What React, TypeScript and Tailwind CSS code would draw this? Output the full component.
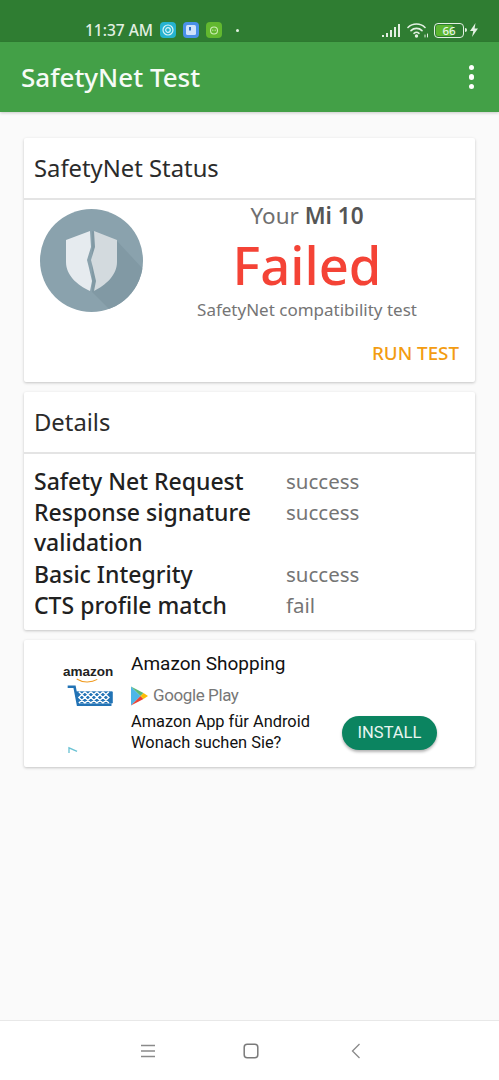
const UI_FONT = "font-['Noto_Sans',sans-serif]";

function StatusBar() {
  return (
    <div className="flex h-[42px] items-end bg-[#2f7d32] pb-[1px] pl-[85px] pr-[20px]">
      <span className="text-[15.5px] font-medium leading-[22px] text-[#e3f0e3]">11:37 AM</span>
      <div className="mb-[3px] ml-[7px] flex items-center gap-[7px]">
        <svg width="16" height="16" viewBox="0 0 16 16">
          <rect width="16" height="16" rx="4" fill="#26b3cf" />
          <circle cx="8" cy="8" r="5" fill="none" stroke="#d8f4f8" strokeWidth="1.2" />
          <circle cx="8" cy="8" r="2.3" fill="none" stroke="#d8f4f8" strokeWidth="1.2" />
        </svg>
        <svg width="16" height="16" viewBox="0 0 16 16">
          <rect width="16" height="16" rx="4" fill="#4a90e8" />
          <rect x="3" y="3" width="10" height="10" rx="1.5" fill="#cfe2fb" />
          <rect x="6" y="5" width="2" height="3.5" fill="#2e6ec4" />
        </svg>
        <svg width="16" height="16" viewBox="0 0 16 16">
          <rect width="16" height="16" rx="4" fill="#62b82f" />
          <circle cx="8" cy="8.5" r="3.5" fill="none" stroke="#cdeeb4" strokeWidth="1.1" />
          <circle cx="6.8" cy="8.2" r="0.6" fill="#cdeeb4" />
          <circle cx="9.2" cy="8.2" r="0.6" fill="#cdeeb4" />
        </svg>
        <span className="ml-[7px] h-[3px] w-[3px] rounded-full bg-[#e3f0e3]" />
      </div>
      <div className="mb-[3px] ml-auto flex items-center">
        <svg width="20" height="15" viewBox="0 0 20 15" fill="#e3f0e3">
          <rect x="0" y="12" width="2" height="2" />
          <rect x="4" y="10" width="2" height="4" />
          <rect x="8" y="7" width="2" height="7" />
          <rect x="12" y="4" width="2" height="10" />
          <rect x="16" y="1" width="2" height="13" />
        </svg>
        <svg className="ml-[5px]" width="22" height="16" viewBox="0 0 22 16" fill="none" stroke="#e3f0e3" strokeWidth="1.6" strokeLinecap="round">
          <path d="M1 5.5 C5.5 0.8 13.5 0.8 18 5.5" />
          <path d="M4 8.6 C7 5.6 12 5.6 15 8.6" />
          <path d="M7 11.3 C8.5 10 10.5 10 12 11.3" />
          <circle cx="9.5" cy="14" r="0.9" fill="#e3f0e3" />
          <path d="M18 13v2M20.5 12v3" strokeWidth="1" />
        </svg>
        <div className="relative ml-[5px] flex h-[15px] w-[30px] items-center rounded-[4px] border border-[#e3f0e3] p-[1px]">
          <div className="h-full w-[65%] rounded-[2px] bg-[#5cb531]" />
          <span className="absolute inset-0 text-center text-[11.5px] font-medium leading-[13px] text-[#e8f5e8]">66</span>
        </div>
        <span className="ml-[1px] h-[4px] w-[2px] rounded-r-sm bg-[#e3f0e3]" />
        <svg className="ml-[2px]" width="10" height="14" viewBox="0 0 10 14" fill="#e3f0e3">
          <path d="M6.5 0 L1 8 H4.3 L3 14 L9 5.6 H5.6 Z" />
        </svg>
      </div>
    </div>
  );
}

function AppBar() {
  return (
    <div className="flex h-[70px] items-center justify-between bg-[#43a047] pl-[21px] pr-[25px] shadow-[0_1px_3px_rgba(0,0,0,0.2)]">
      <span className="text-[26px] font-medium leading-[32px] text-[#f6fbf6]">SafetyNet Test</span>
      <div className="flex flex-col gap-[4px]">
        <span className="h-[5.5px] w-[5.5px] rounded-full bg-white" />
        <span className="h-[5.5px] w-[5.5px] rounded-full bg-white" />
        <span className="h-[5.5px] w-[5.5px] rounded-full bg-white" />
      </div>
    </div>
  );
}

function ShieldBadge() {
  return (
    <svg width="103" height="103" viewBox="0 0 103 103">
      <defs>
        <clipPath id="badge">
          <circle cx="51.5" cy="51.5" r="51.5" />
        </clipPath>
      </defs>
      <circle cx="51.5" cy="51.5" r="51.5" fill="#8aa2ad" />
      <path d="M52 22 L77 32 L103 60 V103 H72 L52 83 Z" fill="#8199a4" clipPath="url(#badge)" />
      <path d="M50 22 L26 31 V53 C26 66 37 76 50 82 L52 72 L49 59 L47 51 L51 38 Z" fill="#e6ebef" />
      <path d="M54 22 L77 31 V53 C77 66 66 76 54 82 L56 72 L53 59 L51 51 L55 38 Z" fill="#d3dade" />
    </svg>
  );
}

function StatusCard() {
  return (
    <div className="rounded-[2px] bg-white shadow-[0_1px_3px_rgba(0,0,0,0.22)]">
      <div className="flex h-[62px] items-center border-b-2 border-[#e4e4e4] pl-[10px]">
        <span className="text-[23.8px] leading-[30px] text-[#2b2b2b]">SafetyNet Status</span>
      </div>
      <div className="flex h-[182px]">
        <div className="pl-[16px] pt-[9px]">
          <ShieldBadge />
        </div>
        <div className="flex flex-1 flex-col">
          <div className="flex flex-col items-center pr-[4px] text-center">
            <span className="text-[22.5px] leading-[32px] text-[#6f6f6f]">
              Your <span className="font-semibold text-[#555]">Mi 10</span>
            </span>
            <span className="mt-[-1px] text-[52.5px] font-medium leading-[67px] text-[#f44336]">Failed</span>
            <span className="text-[17px] leading-[24px] text-[#757575]">SafetyNet compatibility test</span>
          </div>
          <div className="mt-[19px] pr-[16px] text-right text-[18.8px] font-medium leading-[24px] text-[#f39c12]">RUN TEST</div>
        </div>
      </div>
    </div>
  );
}

const DETAILS = [
  { label: "Safety Net Request", value: "success" },
  { label: "Response signature validation", value: "success" },
  { label: "Basic Integrity", value: "success" },
  { label: "CTS profile match", value: "fail" },
];

function DetailsCard() {
  return (
    <div className="rounded-[2px] bg-white shadow-[0_1px_3px_rgba(0,0,0,0.22)]">
      <div className="flex h-[62px] items-center border-b-2 border-[#e4e4e4] pl-[10px]">
        <span className="text-[23.8px] leading-[30px] text-[#2b2b2b]">Details</span>
      </div>
      <div className="flex flex-col gap-[1px] pb-[10px] pl-[10px] pt-[12px]">
        {DETAILS.map((d) => (
          <div key={d.label} className="flex [&:nth-child(2)]:pb-[1px]">
            <span className="w-[252px] pr-[20px] text-[23px] font-medium leading-[30px] text-[#212121]">{d.label}</span>
            <span className="text-[20.5px] leading-[30px] text-[#757575]">{d.value}</span>
          </div>
        ))}
      </div>
    </div>
  );
}

function AmazonLogo() {
  return (
    <div className="flex h-[103px] w-[62px] flex-col items-start overflow-hidden">
      <span className="ml-[1px] mt-[14px] font-['Liberation_Sans',sans-serif] text-[13.5px] font-bold leading-[16px] text-[#222]">amazon</span>
      <svg className="ml-[13px] mt-[-2px]" width="24" height="6" viewBox="0 0 28 6" fill="none" stroke="#f09a1f" strokeWidth="1.2">
        <path d="M2 1 C9 5.5 19 5.5 26 1.5" />
      </svg>
      <svg className="ml-[2px] mt-[2px]" width="52" height="24" viewBox="0 0 54 25" fill="none" stroke="#2273b5">
        <path d="M1 2 H9 L13 23 H52" strokeWidth="3" />
        <path d="M11 8 H53 V21 H14 Z" fill="#2273b5" strokeWidth="1" />
        <path d="M14 8 L21 14.5 L14 21 M21 8 L28 14.5 L21 21 M28 8 L35 14.5 L28 21 M35 8 L42 14.5 L35 21 M42 8 L49 14.5 L42 21 M21 8 L14 14.5 L21 21 M28 8 L21 14.5 L28 21 M35 8 L28 14.5 L35 21 M42 8 L35 14.5 L42 21 M49 8 L42 14.5 L49 21" stroke="#fff" strokeWidth="1.6" />
      </svg>
      <svg className="ml-[-4px] mt-[39px]" width="22" height="8" viewBox="0 0 22 8" fill="none" stroke="#6cc3d4" strokeWidth="1.5">
        <path d="M1 7 L3 5 M11 8 L11 2 L20 6" />
      </svg>
    </div>
  );
}

function PlayLogo() {
  return (
    <svg width="17" height="20" viewBox="0 0 17 20">
      <path d="M0 0.5 V19.5 L9.5 10 Z" fill="#4db6e8" />
      <path d="M0 0.5 L9.5 10 L12.5 7 Z" fill="#5bb974" />
      <path d="M0 19.5 L9.5 10 L12.5 13 Z" fill="#ea4335" />
      <path d="M12.5 7 L17 10 L12.5 13 L9.5 10 Z" fill="#fbbc04" />
    </svg>
  );
}

function AdCard() {
  return (
    <div className="flex h-[127px] rounded-[2px] bg-white pl-[38px] pt-[10px] font-['Roboto',sans-serif] shadow-[0_1px_3px_rgba(0,0,0,0.22)]">
      <AmazonLogo />
      <div className="ml-[7px] flex flex-col">
        <span className="text-[19px] leading-[28px] text-[#111]">Amazon Shopping</span>
        <div className="mt-[6px] flex h-[24px] items-center gap-[5px]">
          <PlayLogo />
          <span className="text-[17px] tracking-[-0.4px] text-[#777]">Google Play</span>
        </div>
        <div className="mt-[3px] flex items-end">
          <div className="w-[211px] text-[16.4px] leading-[21px] text-[#111]">
            Amazon App für Android
            <br />
            Wonach suchen Sie?
          </div>
          <div className="mb-[3px] flex h-[34px] w-[95px] items-center justify-center rounded-full bg-[#0b8460] text-[16.5px] text-[#e8f5f0] shadow-[0_2px_3px_rgba(0,0,0,0.3)]">
            INSTALL
          </div>
        </div>
      </div>
    </div>
  );
}

function NavBar() {
  return (
    <div className="flex h-[60px] items-start justify-center border-t border-[#e8e8e8] bg-white pl-[2px] pt-[22px]">
      <svg width="16" height="16" viewBox="0 0 16 16" stroke="#8a8a8a" strokeWidth="1.3">
        <path d="M1 2.5 H15 M1 8 H15 M1 13.5 H15" />
      </svg>
      <svg className="ml-[87px]" width="16" height="16" viewBox="0 0 16 16" fill="none" stroke="#7a7a7a" strokeWidth="1.5">
        <rect x="1.2" y="1.2" width="13.6" height="13.6" rx="3" />
      </svg>
      <svg className="ml-[92px]" width="10" height="16" viewBox="0 0 10 16" fill="none" stroke="#8a8a8a" strokeWidth="1.3">
        <path d="M8.5 1 L1.5 8 L8.5 15" />
      </svg>
    </div>
  );
}

export default function App() {
  return (
    <div className={`flex h-[1080px] w-[499px] flex-col overflow-hidden bg-[#fafafa] ${UI_FONT}`}>
      <StatusBar />
      <AppBar />
      <div className="flex flex-1 flex-col gap-[10px] px-[24px] pt-[26px]">
        <StatusCard />
        <DetailsCard />
        <AdCard />
      </div>
      <NavBar />
    </div>
  );
}
